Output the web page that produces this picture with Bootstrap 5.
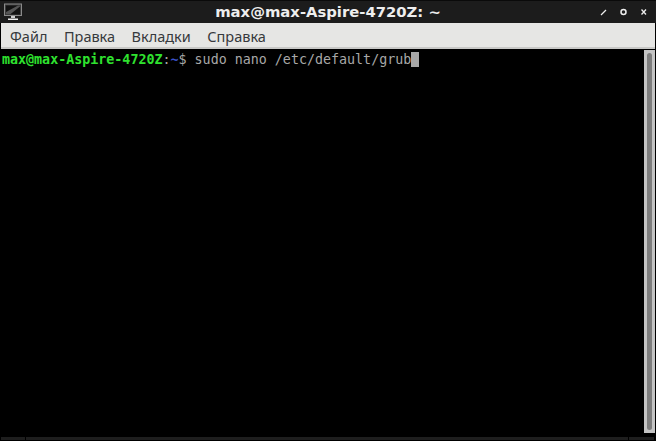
<!DOCTYPE html>
<html><head><meta charset="utf-8"><title>Terminal</title>
<link href="https://cdn.jsdelivr.net/npm/bootstrap@5.3.0/dist/css/bootstrap.min.css" rel="stylesheet">
<style>
html,body{width:656px;height:441px;overflow:hidden;background:#000}
.win{width:656px;height:441px;background:#000;padding:0 1px 1px}
.titlebar{height:23px;background:#1c1c1c;margin:0 -1px;border-top:1px solid #0a0a0a;flex:none}
.wicon{margin-left:4px;width:18px;height:18px;flex:none}
.wtitle{font:700 14.800px "DejaVu Sans",sans-serif;color:#eee;line-height:24px;margin-left:-22px}
.wbtns{right:0;top:6px}
.wbtn{width:20px;height:12px;display:block}
.menubar{height:26px;background:#e6e6e4;border-bottom:2px solid #c8c8c6;flex:none;padding-left:9px;gap:16.500px;font:14.500px/27px "Noto Sans",sans-serif;color:#36393c}
.termrow{min-height:0;margin-top:1px}
.term{font:13.33px/16px "DejaVu Sans Mono",monospace;color:#a8a8a8;padding:2px 0 0 1px;white-space:pre;min-width:0}
.pg{color:#2fe22f;font-weight:700}
.pb{color:#3b52c8;font-weight:700}
.pc{color:#a8a8a8}
.cursor{display:inline-block;width:8px;height:15px;background:#a8a8a8;vertical-align:-3px}
.sb{width:11px;background:#c4c4c4;padding:3px;flex:none;margin-bottom:2px}
.thumb{background:#7d7d7d;border-radius:3px;height:100%}
.bottomstrip{height:3px;margin:2px 0 0;flex:none;gap:1px;padding-right:1px}
.seg{background:#1e1e1e}
.seg1{width:24px}
.seg3{width:25px}
</style></head>
<body>
<div class="win d-flex flex-column">
<div class="titlebar position-relative d-flex align-items-center">
<svg class="wicon" viewBox="0 0 18 18"><rect x=".5" y="1" width="17" height="11.500" fill="#3a3a3a" stroke="#8a8a8a"/><path d="M2 2.500h14v9H2z" fill="#111"/><path d="M2 11.500V9L14 2.500h2v1L6 11.500z" fill="#555"/><path d="M7 13h4v2H7z" fill="#ccc"/><path d="M4 15.500h10v1.500H4z" fill="#eee"/></svg>
<div class="flex-grow-1 text-center wtitle">max@max-Aspire-4720Z: ~</div>
<div class="position-absolute d-flex wbtns">
<svg class="wbtn" viewBox="0 0 20 12"><path d="M5 8L10 3" stroke="#eee" stroke-width="1.300" fill="none"/></svg>
<svg class="wbtn" viewBox="0 0 20 12"><circle cx="7.500" cy="5" r="2.500" stroke="#eee" stroke-width="1.500" fill="none"/></svg>
<svg class="wbtn" viewBox="0 0 20 12"><path d="M5.500 2.500l4.500 5m0-5l-4.500 5" stroke="#eee" stroke-width="1.300" fill="none"/></svg>
</div>
</div>
<div class="menubar d-flex"><span>Файл</span><span>Правка</span><span>Вкладки</span><span>Справка</span></div>
<div class="termrow d-flex flex-grow-1">
<div class="term flex-grow-1"><span class="pg">max@max-Aspire-4720Z</span><span class="pc">:</span><span class="pb">~</span><span class="pc">$ sudo nano /etc/default/grub</span><span class="cursor"></span></div>
<div class="sb"><div class="thumb"></div></div>
</div>
<div class="bottomstrip d-flex"><div class="seg seg1"></div><div class="seg flex-grow-1"></div><div class="seg seg3"></div></div>
</div>
</body></html>
